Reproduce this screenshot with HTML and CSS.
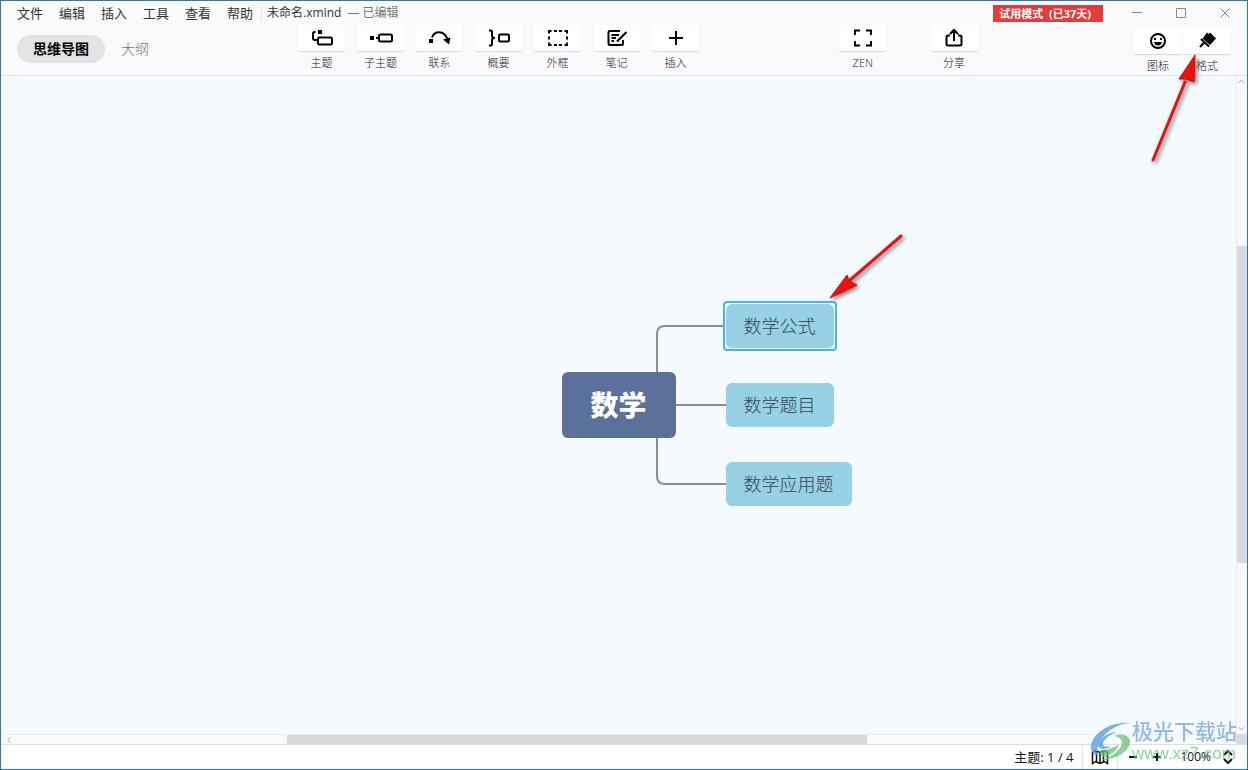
FILE: index.html
```html
<!DOCTYPE html>
<html lang="zh-CN">
<head>
<meta charset="utf-8">
<meta name="viewport" content="width=device-width, initial-scale=1">
<title>未命名.xmind</title>
<link rel="stylesheet" href="styles.css">
</head>
<body>
<div class="window">
  <header class="header">
    <div class="titlebar">
      <nav class="menu" aria-label="菜单">
        <button class="menu-item" type="button">文件</button>
        <button class="menu-item" type="button">编辑</button>
        <button class="menu-item" type="button">插入</button>
        <button class="menu-item" type="button">工具</button>
        <button class="menu-item" type="button">查看</button>
        <button class="menu-item" type="button">帮助</button>
      </nav>
      <div class="file"><span>未命名.xmind</span><span class="file-state">— 已编辑</span></div>
      <span class="trial">试用模式&nbsp; (已37天)</span>
      <div class="controls">
        <button class="control" type="button" aria-label="最小化"><svg width="12" height="12" viewBox="0 0 12 12"><path d="M1 5.500h10"/></svg></button>
        <button class="control" type="button" aria-label="最大化"><svg width="12" height="12" viewBox="0 0 12 12"><path d="M1.500 1.500h9v9h-9z"/></svg></button>
        <button class="control" type="button" aria-label="关闭"><svg width="12" height="12" viewBox="0 0 12 12"><path d="M1.500 1.500l9 9M10.500 1.500l-9 9"/></svg></button>
      </div>
    </div>
    <div class="toolbar">
      <div class="tabs">
        <button class="tab tab-active" type="button">思维导图</button>
        <button class="tab" type="button">大纲</button>
      </div>
      <div class="tools">
        <button class="tool" type="button"><span class="tile"><svg class="icon" viewBox="0 0 24 24"><path d="M5.500 6H4.500Q3 6 3 7.500V12q0 2 2 2h2"/><rect x="8" y="11.500" width="14" height="7" rx="1.500"/><path class="solid" d="M8 4h4v4H8z"/></svg></span><span>主题</span></button>
        <button class="tool" type="button"><span class="tile"><svg class="icon" viewBox="0 0 24 24"><path class="solid" d="M1 10h4v4H1z"/><path d="M7 12h3"/><rect x="10" y="8.500" width="13" height="7" rx="1.500"/></svg></span><span>子主题</span></button>
        <button class="tool" type="button"><span class="tile"><svg class="icon" viewBox="0 0 24 24"><path class="solid" d="M1 13h4v4H1z"/><path d="M4 11.500C6.500 4.500 16 4 19.500 13"/><path class="solid" d="M15 13.500l7.500-2-1.500 7z"/></svg></span><span>联系</span></button>
        <button class="tool" type="button"><span class="tile"><svg class="icon" viewBox="0 0 24 24"><path d="M2 4.500h1.500Q5 4.500 5 6v4q0 2 3 2-3 0-3 2v4q0 1.500-1.500 1.500H2"/><rect x="12" y="8.500" width="10" height="7" rx="1"/></svg></span><span>概要</span></button>
        <button class="tool" type="button"><span class="tile"><svg class="icon" viewBox="0 0 24 24"><path d="M3 7.500V5h2.500M8 5h3M13 5h3M18.500 5H21v2.500M21 10.500v3M21 16.500V19h-2.500M16 19h-3M11 19H8M5.500 19H3v-2.500M3 13.500v-3"/></svg></span><span>外框</span></button>
        <button class="tool" type="button"><span class="tile"><svg class="icon" viewBox="0 0 24 24"><path d="M15 5H5Q3.500 5 3.500 6.500v11Q3.500 19 5 19h11.500q1.500 0 1.500-1.500V14M6.500 9H14M6.500 12H11M6.500 15H9M21.500 6L12 15.500"/></svg></span><span>笔记</span></button>
        <button class="tool" type="button"><span class="tile"><svg class="icon" viewBox="0 0 24 24"><path d="M12 5v14M5 12h14"/></svg></span><span>插入</span></button>
      </div>
      <button class="tool tool-zen" type="button"><span class="tile"><svg class="icon" viewBox="0 0 24 24"><path d="M4 9V4.500h5M15 4.500h5V9M20 15v4.500h-5M9 19.500H4V15"/></svg></span><span>ZEN</span></button>
      <button class="tool tool-share" type="button"><span class="tile"><svg class="icon" viewBox="0 0 24 24"><path d="M8 9.500H6Q4.500 9.500 4.500 11v7q0 1.500 1.500 1.500h12q1.500 0 1.500-1.500v-7q0-1.500-1.500-1.500h-2M12 15V4.500M8 8l4-4 4 4"/></svg></span><span>分享</span></button>
      <div class="panels">
        <button class="tool panel" type="button"><span class="tile"><svg class="icon" viewBox="0 0 24 24"><circle cx="12" cy="12" r="7"/><path class="solid" d="M8 9h2v2H8zM14 9h2v2h-2zM8 13h8q-.8 3.500-4 3.500T8 13z"/></svg></span><span>图标</span></button>
        <button class="tool panel" type="button"><span class="tile"><svg class="icon" viewBox="0 0 24 24"><path class="solid" d="M12 3.500l2 1.500 1-1.500L21 9.500l-6 6.500-7.500-6.500z"/><path d="M6 10l8 7.500M9.500 13L5 18"/></svg></span><span>格式</span></button>
      </div>
    </div>
  </header>

  <main class="workspace">
    <div class="canvas">
      <div class="map">
        <svg class="links" viewBox="0 0 290 206" aria-hidden="true"><path d="M164 25H103Q95 25 95 33V80M110 104h54M95 130v45q0 8 8 8h61"/></svg>
        <div class="root">数学</div>
        <div class="selection" aria-hidden="true"></div>
        <div class="node node-first">数学公式</div>
        <div class="node node-second">数学题目</div>
        <div class="node node-third">数学应用题</div>
        <svg class="pointer pointer-node" viewBox="0 0 90 80" aria-hidden="true"><path class="shaft" d="M79 12L27 57"/><path class="head" d="M8 74l17-23 2 6 8 4z"/></svg>
      </div>
    </div>
    <div class="scroll-y"><svg class="chevron" viewBox="0 0 10 10"><path d="M2 7l3-3 3 3"/></svg><div class="track-y"><div class="thumb-y"></div></div><svg class="chevron" viewBox="0 0 10 10"><path d="M2 3l3 3 3-3"/></svg></div>
    <div class="scroll-x"><svg class="chevron" viewBox="0 0 10 10"><path d="M7 2L4 5l3 3"/></svg><div class="track-x"><div class="thumb-x"></div></div></div>
    <div class="corner"></div>
  </main>

  <footer class="status">
    <span class="count">主题: 1 / 4</span>
    <button class="status-button overview" type="button" aria-label="导航图"><svg class="status-icon" viewBox="0 0 18 18"><path d="M1.500 4.500l3-2 4.500 2 4.500-2 3 2v11l-3-2-4.500 2-4.500-2-3 2zM5.500 3v10.500M9 4.500v11M12.500 3v10.500"/></svg></button>
    <button class="status-button zoom-out" type="button" aria-label="缩小"><svg class="status-icon" viewBox="0 0 18 18"><path d="M5 9h8"/></svg></button>
    <button class="status-button zoom-in" type="button" aria-label="放大"><svg class="status-icon" viewBox="0 0 18 18"><path d="M5 9h8M9 5v8"/></svg></button>
    <button class="status-button zoom-level" type="button"><span>100%</span><svg class="status-icon" viewBox="0 0 18 18"><path d="M5 7l4-4 4 4M5 11l4 4 4-4"/></svg></button>
  </footer>

  <svg class="pointer pointer-format" viewBox="0 0 70 120" aria-hidden="true"><path class="shaft" d="M14 110L46 32"/><path class="head" d="M56 5L40 29l7 0 8 3z"/></svg>

  <div class="watermark">
    <svg class="watermark-logo" viewBox="0 0 42 42" aria-hidden="true">
      <path class="logo-blue" d="M41 3C24 1 5 10 1 25c-1 7 3 10 8 11C4 30 11 15 22 9 28 5 34 3 41 3z"/>
      <path class="logo-blue" d="M27 12C18 12 9 19 8 25c0 5 8 5 14 1-5 1-9 1-9-2 0-4 7-10 14-12z"/>
      <path class="logo-green" d="M24 16c9-4 17 0 16 7-2 9-14 17-29 17 11-3 20-10 21-17 0-4-3-6-8-7z"/>
      <path class="logo-green" d="M10 30c7 0 14-2 19-6-2 6-8 12-16 13-3-2-4-4-3-7z"/>
    </svg>
    <div class="watermark-text"><span class="watermark-name">极光下载站</span><span class="watermark-site">www.xz7.com</span></div>
  </div>
</div>
</body>
</html>
```
FILE: styles.css
```css
* { box-sizing: border-box; }

body {
  margin: 0;
  font-family: "Open Sans", "Noto Sans CJK SC", sans-serif;
  font-size: 12px;
  color: #333;
}

button {
  margin: 0;
  padding: 0;
  border: 0;
  background: none;
  font: inherit;
  color: inherit;
}

svg { display: block; flex: none; }

.window {
  position: relative;
  display: flex;
  flex-direction: column;
  min-height: 100vh;
  border: 1px solid #2f78b0;
  background: #fff;
}

.header {
  background: #fafafc;
  border-bottom: 1px solid #dce8ef;
}

.titlebar {
  display: flex;
  align-items: center;
  height: 23px;
  padding: 0 16px;
  white-space: nowrap;
}

.menu { display: flex; gap: 16px; font-size: 13px; line-height: 22px; }

.file {
  display: flex;
  gap: 6px;
  margin-left: 8px;
  padding-left: 5px;
  border-left: 1px solid #e4e4e8;
  line-height: 16px;
}

.file-state { color: #777; }

.trial {
  margin: 2px 28px 0 auto;
  padding: 0 12px 0 6px;
  background: #e53b3b;
  color: #fff;
  font-size: 11px;
  font-weight: 700;
  line-height: 17px;
}

.controls { display: flex; gap: 32px; }
.control svg { fill: none; stroke: #8a8589; }

.toolbar {
  display: grid;
  grid-template-columns: 275px auto 127fr auto 32fr auto 149fr auto;
  align-items: start;
  height: 51px;
  padding: 0 16px;
}

.tabs { display: flex; gap: 16px; margin-top: 11px; font-size: 14px; line-height: 28px; color: #777277; font-weight: 300; }
.tab-active { padding: 0 16px; border-radius: 14px; background: #e4e4e6; color: #000; font-weight: 700; }

.tools { display: flex; }

.tool {
  display: flex;
  flex-direction: column;
  align-items: center;
  gap: 3px;
  width: 59px;
  padding-top: 1px;
  font-size: 11px;
  font-weight: 300;
  line-height: 17px;
  color: #222;
}

.tool-zen { grid-column: 4; }
.tool-share { grid-column: 6; }

.tile {
  display: grid;
  place-items: center;
  width: 47px;
  height: 26px;
  border-radius: 2px;
  background: #fff;
  box-shadow: 0 1px 1px #d8d8dc;
}

.icon { width: 24px; height: 24px; fill: none; stroke: #000; stroke-width: 2; }
.solid { fill: #000; stroke: none; }

.panels { grid-column: 8; display: flex; gap: 1px; padding-top: 3px; }
.panel { width: 48px; }
.panel .tile { width: 48px; }

.workspace {
  flex: 1;
  display: grid;
  grid-template-columns: 1fr 11px;
  grid-template-rows: 1fr 10px;
  background: #f5fafe;
  border-bottom: 1px solid #dedede;
}

.canvas { position: relative; overflow: hidden; }

.map {
  position: absolute;
  left: calc(50% - 57px);
  top: calc(50% - 104px);
  width: 290px;
  height: 206px;
}

.links { position: absolute; inset: 0; width: 290px; height: 206px; fill: none; stroke: #858ba1; stroke-width: 2; }

.root, .node, .selection { position: absolute; white-space: nowrap; }

.root {
  left: 0;
  top: 71px;
  padding: 0 29px;
  border-radius: 6px;
  background: #5b719a;
  color: #fff;
  font-size: 28px;
  font-weight: 900;
  line-height: 66px;
}

.node {
  left: 164px;
  padding: 0 18px;
  border-radius: 6px;
  background: #96d1e6;
  color: #36434f;
  font-size: 18px;
  font-weight: 300;
  line-height: 44px;
}

.selection { left: 161px; top: 0; width: 114px; height: 50px; border: 2px solid #44b5ed; border-radius: 4px; background: #f5fafe; }
.node-first { top: 3px; }
.node-second { top: 82px; }
.node-third { top: 161px; }

.pointer { position: absolute; filter: drop-shadow(2px 2px 2px #777); pointer-events: none; }
.shaft { fill: none; stroke: #e01414; stroke-width: 3; stroke-linecap: round; }
.head { fill: #ed1010; stroke: #d01010; stroke-width: 1; }
.pointer-node { left: 260px; top: -77px; width: 90px; height: 80px; }
.pointer-format { right: 38px; top: 49px; width: 70px; height: 120px; }

.scroll-y { display: flex; flex-direction: column; background: #f9f9fb; border-left: 1px solid #eee9e9; }
.scroll-x { display: flex; background: #f9fafb; border-top: 1px solid #ececf0; }
.track-y { flex: 1; padding-top: 160px; }
.track-x { flex: 1; }
.thumb-y { width: 100%; height: 317px; background: #d9dade; }
.thumb-x { width: 580px; height: 100%; margin-left: 274px; background: #d8d8da; }
.scroll-x .chevron { margin-left: 3px; }
.chevron { width: 9px; height: 10px; fill: none; stroke: #9a9bab; }
.corner { background: #d9dade; }

.status {
  display: flex;
  align-items: center;
  justify-content: flex-end;
  height: 24px;
  padding-right: 10px;
  background: #fff;
  color: #111;
  font-size: 13px;
  line-height: 24px;
}

.count { padding-right: 9px; }
.status-button { display: flex; align-items: center; justify-content: center; height: 24px; }
.status-icon { width: 18px; height: 18px; fill: none; stroke: #111; stroke-width: 2; }
.overview { width: 36px; border: 1px solid #e4e4e8; border-width: 0 1px; }
.overview .status-icon { stroke-width: 1.500; }
.zoom-out { width: 30px; }
.zoom-in { width: 18px; }
.zoom-level { gap: 8px; margin-left: 14px; font-size: 12px; }

.watermark {
  position: absolute;
  right: 10px;
  bottom: 6px;
  display: flex;
  align-items: center;
  opacity: 0.75;
  pointer-events: none;
  font-family: "Liberation Sans", "Noto Sans CJK SC", sans-serif;
  white-space: nowrap;
}

.watermark-logo { width: 42px; height: 42px; }
.logo-blue { fill: #4b9bdc; }
.logo-green { fill: #66c471; }
.watermark-text { display: flex; flex-direction: column; }
.watermark-name { color: #70a5dc; font-size: 21px; font-weight: 500; line-height: 26px; }
.watermark-site { color: #62c681; font-size: 17px; line-height: 18px; }
```
